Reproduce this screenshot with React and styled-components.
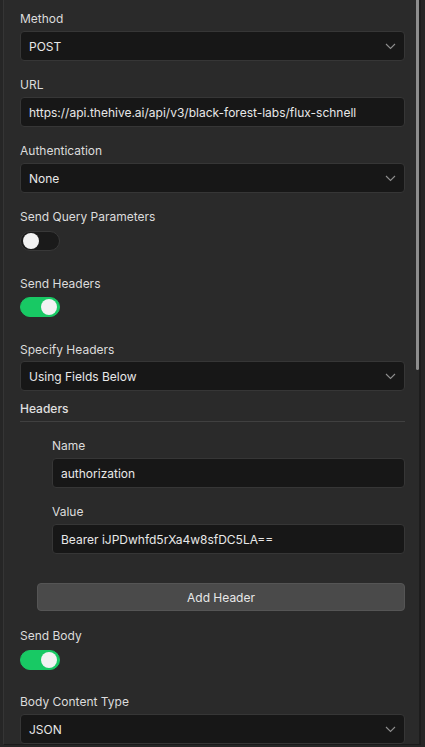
import React from "react";
import styled, { createGlobalStyle } from "styled-components";

const Global = createGlobalStyle`
  html, body { margin: 0; padding: 0; background: #262626; }
  body { font-family: Inter, "Noto Sans", sans-serif; -webkit-font-smoothing: antialiased; }
  * { box-sizing: border-box; }
`;

const Shell = styled.div`
  width: 425px;
  height: 747px;
  display: flex;
  background: #262626;
  overflow: hidden;
`;

const Frame = styled.div`
  position: relative;
  margin-left: 3px;
  width: 418px;
  height: 745px;
  background: #2a2a2a;
  border-left: 1px solid #353535;
  border-right: 2px solid #1d1d1d;
  border-bottom: 1px solid #1a1a1a;
  overflow: hidden;
`;

const Content = styled.div`
  display: flex;
  flex-direction: column;
  padding: 11px 14px 0 16px;
`;

const Thumb = styled.div`
  position: absolute;
  right: 0;
  top: 0;
  width: 3px;
  height: 370px;
  background: #8d8d8d;
  border-radius: 0 0 2px 2px;
`;

const Field = styled.div`
  display: flex;
  flex-direction: column;
  gap: ${(p) => p.$gap ?? 5}px;
  margin-bottom: ${(p) => p.$mb ?? 16}px;
  padding-left: ${(p) => p.$indent ?? 0}px;
`;

const Label = styled.div`
  font-size: 12px;
  line-height: 15px;
  color: #dcdcdc;
`;

const Box = styled.div`
  height: 30px;
  display: flex;
  align-items: center;
  justify-content: space-between;
  padding: 0 8px 0 8px;
  background: #171717;
  border: 1px solid #363636;
  border-radius: 4px;
  font-size: 12px;
  color: #e8e8e8;
  white-space: nowrap;
`;

const Chevron = () => (
  <svg width="11" height="7" viewBox="0 0 11 7" fill="none">
    <polyline points="1,1 5.5,5.5 10,1" stroke="#8e8e8e" strokeWidth="1.1" />
  </svg>
);

const Select = ({ value }) => (
  <Box>
    <span>{value}</span>
    <Chevron />
  </Box>
);

const Track = styled.div`
  width: 40px;
  height: 20px;
  border-radius: 10px;
  display: flex;
  align-items: center;
  justify-content: ${(p) => (p.$on ? "flex-end" : "flex-start")};
  padding: 0 2px;
  background: ${(p) => (p.$on ? "#18c964" : "#1a1a1a")};
  border: 1px solid ${(p) => (p.$on ? "#18c964" : "#383838")};
`;

const Knob = styled.div`
  width: 16px;
  height: 16px;
  border-radius: 50%;
  background: #f2f2f2;
`;

const Toggle = ({ on }) => (
  <Track $on={on}>
    <Knob />
  </Track>
);

const SectionTitle = styled.div`
  font-size: 12px;
  line-height: 15px;
  font-weight: 500;
  color: #e0e0e0;
  padding-bottom: 5px;
  border-bottom: 1px solid #404040;
  margin-bottom: 16px;
`;

const AddButton = styled.button`
  margin: 29px 0 17px 17px;
  height: 28px;
  background: #4a4a4a;
  border: 1px solid #555;
  border-radius: 4px;
  color: #e8e8e8;
  font-family: inherit;
  font-size: 12px;
`;

export default function App() {
  return (
    <>
      <Global />
      <Shell>
        <Frame>
          <Content>
            <Field>
              <Label>Method</Label>
              <Select value="POST" />
            </Field>
            <Field>
              <Label>URL</Label>
              <Box>https://api.thehive.ai/api/v3/black-forest-labs/flux-schnell</Box>
            </Field>
            <Field>
              <Label>Authentication</Label>
              <Select value="None" />
            </Field>
            <Field $gap={7} $mb={25}>
              <Label>Send Query Parameters</Label>
              <Toggle on={false} />
            </Field>
            <Field $gap={6} $mb={25}>
              <Label>Send Headers</Label>
              <Toggle on />
            </Field>
            <Field $gap={4} $mb={10}>
              <Label>Specify Headers</Label>
              <Select value="Using Fields Below" />
            </Field>
            <SectionTitle>Headers</SectionTitle>
            <Field $indent={32}>
              <Label>Name</Label>
              <Box>authorization</Box>
            </Field>
            <Field $indent={32} $mb={0}>
              <Label>Value</Label>
              <Box>Bearer iJPDwhfd5rXa4w8sfDC5LA==</Box>
            </Field>
            <AddButton>Add Header</AddButton>
            <Field $gap={7} $mb={24}>
              <Label>Send Body</Label>
              <Toggle on />
            </Field>
            <Field>
              <Label>Body Content Type</Label>
              <Select value="JSON" />
            </Field>
          </Content>
          <Thumb />
        </Frame>
      </Shell>
    </>
  );
}
